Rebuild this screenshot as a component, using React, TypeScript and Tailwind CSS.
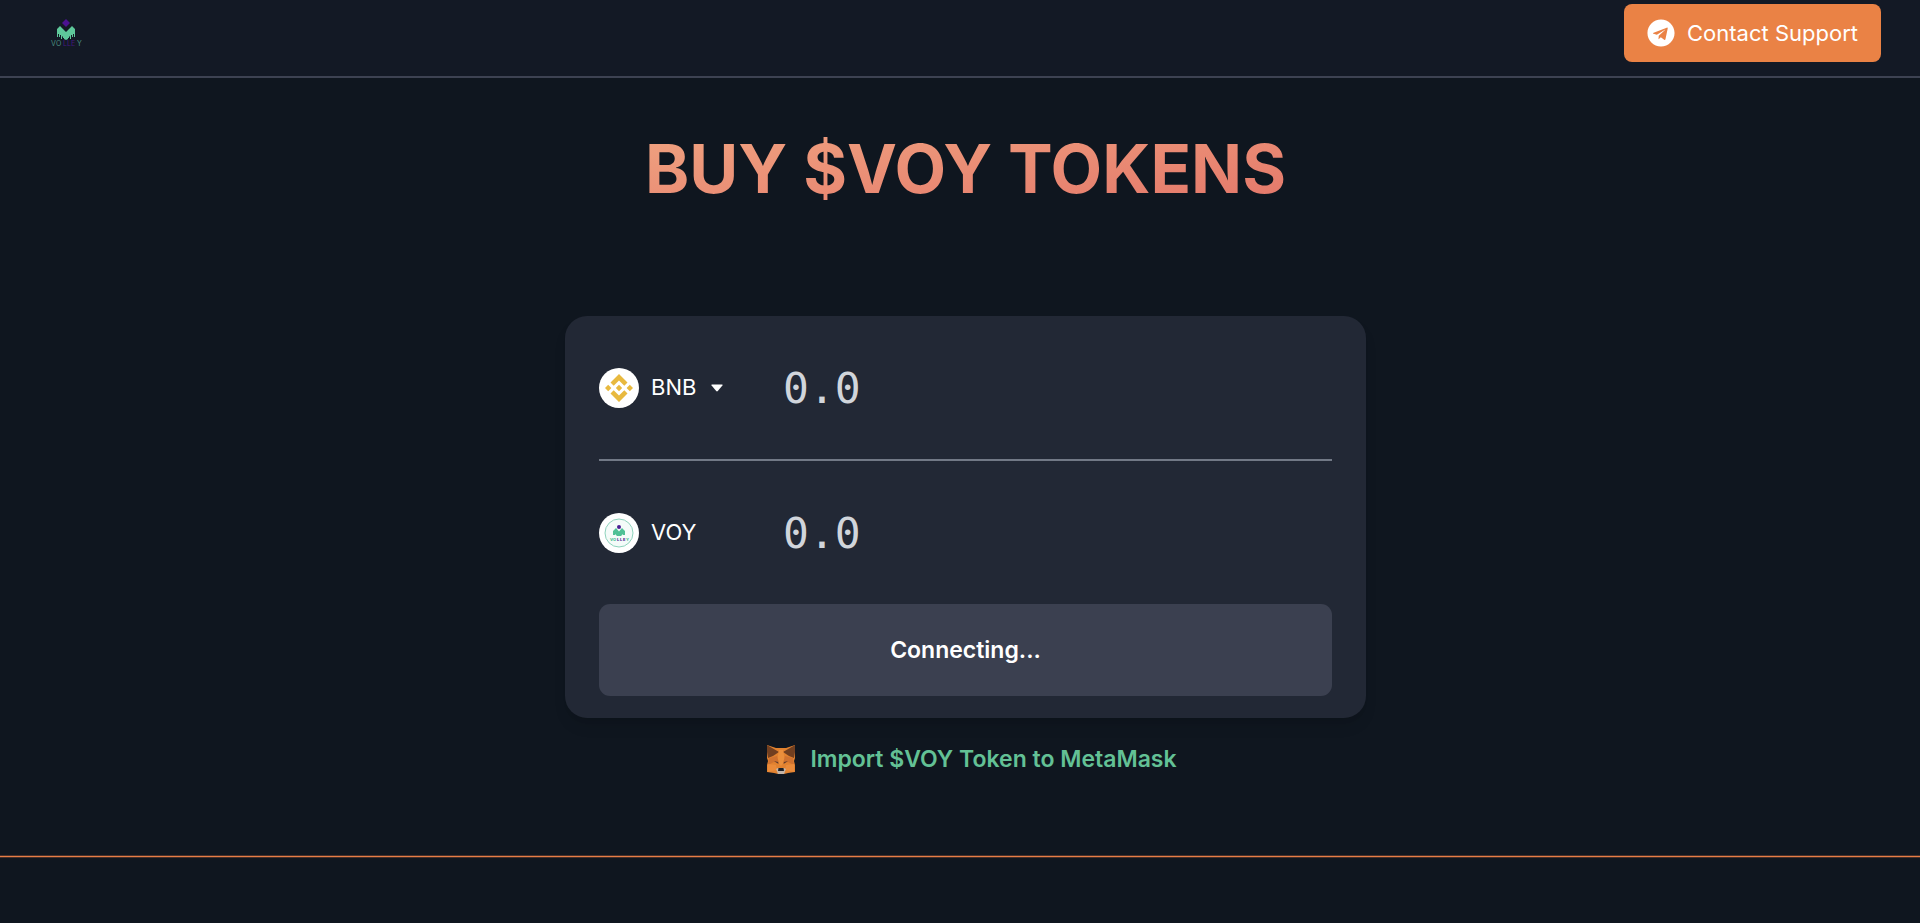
import { FaTelegram } from "react-icons/fa";

const VolleyMark = ({ className }: { className?: string }) => (
  <svg viewBox="0 0 32 32" className={className} aria-hidden="true">
    <path d="M16 3l4 4-4 4-4-4z" fill="#4c1191" />
    <path
      d="M10 10l6 6 6-6 3 3v8h-1v-3h-1v3h-1v-2h-1v4h-1v-3l-1 1v1h-1v1l-2 1-2-1v-1h-1v-1l-1-1v3h-1v-4h-1v2H9v-3H8v3H7v-8z"
      fill="#5ec89a"
    />
    <text y="30" fontSize="7" fontFamily="Inter, sans-serif">
      <tspan x="1" fill="#4b8f80">V</tspan>
      <tspan x="6" fill="#4b8f80">O</tspan>
      <tspan x="13" fill="#42187f">L</tspan>
      <tspan x="17" fill="#42187f">L</tspan>
      <tspan x="21" fill="#42187f">E</tspan>
      <tspan x="27" fill="#4b8f80">Y</tspan>
    </text>
  </svg>
);

const BnbIcon = () => (
  <svg viewBox="0 0 40 40" className="size-10 shrink-0" aria-hidden="true">
    <circle cx="20" cy="20" r="20" fill="#fff" />
    <g fill="#e8b93f">
      <path d="M20 6l8.5 8.5-3.2 3.2L20 12.4l-5.3 5.3-3.2-3.2z" />
      <path d="M20 34l8.5-8.5-3.2-3.2-5.3 5.3-5.3-5.3-3.2 3.2z" />
      <path d="M20 16.8l3.2 3.2-3.2 3.2-3.2-3.2z" />
      <path d="M9.2 16.8l3.2 3.2-3.2 3.2L6 20z" />
      <path d="M30.8 16.8L34 20l-3.2 3.2-3.2-3.2z" />
    </g>
  </svg>
);

const VoyIcon = () => (
  <svg viewBox="0 0 40 40" className="size-10 shrink-0" aria-hidden="true">
    <circle cx="20" cy="20" r="20" fill="#fff" />
    <circle cx="20" cy="20" r="14" fill="#f4fbf9" stroke="#8fd3bd" />
    <circle cx="20" cy="14" r="2" fill="#4a1f94" />
    <path d="M17 15l3 3.500L23 15l3 3v4h-2v-1l-2 2h-4l-2-2v1h-2v-4z" fill="#4fc096" />
    <text y="28" fontSize="4" fontWeight="800" fontFamily="Inter, sans-serif">
      <tspan x="11" fill="#4fc096">V</tspan>
      <tspan x="14" fill="#4fc096">O</tspan>
      <tspan x="18" fill="#4a1f94">L</tspan>
      <tspan x="21" fill="#4a1f94">L</tspan>
      <tspan x="24" fill="#4a1f94">E</tspan>
      <tspan x="27" fill="#4fc096">Y</tspan>
    </text>
  </svg>
);

const FoxIcon = () => (
  <svg viewBox="0 0 30 30" className="size-[30px] shrink-0" aria-hidden="true">
    <path d="M1 1l9 3h10l9-3v13l-1 3 1 4v7l-7 1-4 1h-6l-4-1-7-1v-7l1-4-1-3z" fill="#e2822f" />
    <path d="M1 1l12 7-6 4-5 2-1-6zM29 1L17 8l6 4 5 2 1-6z" fill="#713f20" />
    <path d="M13 6h4l2 11-4 5-4-5z" fill="#ea8f3c" />
    <path d="M3 14l8-2 2 7-5-1-6 3zM27 14l-8-2-2 7 5-1 6 3z" fill="#cf7230" />
    <path d="M8 17l4 1 .5 2zM22 17l-4 1-.5 2z" fill="#5c3a2c" />
    <path d="M2 20l8 1 1 5-9 2zM28 20l-8 1-1 5 9 2z" fill="#ea8b3a" />
    <path d="M10 25l2-1h6l2 1-2 5h-6z" fill="#c3b4a8" />
    <path d="M12.5 24h5l.5 3h-6z" fill="#1c1f26" />
  </svg>
);

const AmountInput = ({ id, label }: { id: string; label: string }) => (
  <input
    id={id}
    aria-label={label}
    type="text"
    inputMode="decimal"
    placeholder="0.0"
    className="min-w-0 flex-1 bg-transparent font-['DejaVu_Sans_Mono',monospace] text-[43px] leading-[56px] text-white outline-none placeholder:text-[#d1d5db]"
  />
);

export default function App() {
  return (
    <div className="min-h-screen bg-[#0f161f] font-['Inter',sans-serif] text-white">
      <header className="flex items-start justify-between border-b-2 border-[#3d4252] bg-[#131925] pt-1 pr-[39px] pb-[14px] pl-[50px]">
        <a href="#" aria-label="Volley home" className="mt-3">
          <VolleyMark className="size-8" />
        </a>
        <a
          href="#support"
          className="flex h-[58px] items-center gap-3 rounded-lg bg-[#ea8245] px-[23px] text-[22px]"
        >
          <FaTelegram className="size-7" />
          Contact Support
        </a>
      </header>

      <main className="flex flex-col items-center pt-[47px] pl-[11px]">
        <h1 className="bg-linear-to-br from-[#f0a481] to-[#e37569] bg-clip-text text-[67px] leading-[88px] font-bold text-transparent">
          BUY $VOY TOKENS
        </h1>

        <section className="mt-[103px] w-full max-w-[801px] rounded-[22px] bg-[#222835] px-[34px] pb-[22px] shadow-lg">
          <div className="flex h-[143px] items-center">
            <button type="button" className="flex w-[184px] items-center gap-3 text-[22px]">
              <BnbIcon />
              BNB
              <svg viewBox="0 0 12 8" className="ml-[3px] h-2 w-3" aria-hidden="true">
                <path d="M1 .5h10q1 0 .4.9L6.8 7q-.8.8-1.6 0L.6 1.4Q0 .5 1 .5z" fill="#fff" />
              </svg>
            </button>
            <AmountInput id="pay" label="BNB amount" />
          </div>
          <hr className="border-t-2 border-[#727986]" />
          <div className="flex h-[143px] items-center">
            <div className="flex w-[184px] items-center gap-3 text-[22px]">
              <VoyIcon />
              VOY
            </div>
            <AmountInput id="receive" label="VOY amount" />
          </div>
          <button
            type="button"
            className="h-[92px] w-full rounded-[11px] bg-[#3b4050] text-[23px] font-semibold"
          >
            Connecting...
          </button>
        </section>

        <button
          type="button"
          className="mt-[25px] flex items-center gap-[14px] pl-3 text-[23px] leading-8 font-semibold text-[#63c195]"
        >
          <FoxIcon />
          Import $VOY Token to MetaMask
        </button>
      </main>

      <hr className="mt-20 h-[3px] border-y border-[#4a3029] bg-[#e67d45]" />
    </div>
  );
}
